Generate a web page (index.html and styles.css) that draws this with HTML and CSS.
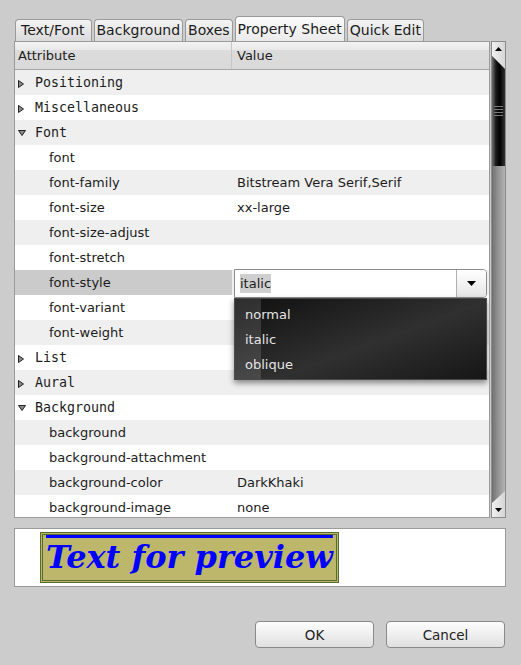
FILE: index.html
```html
<!DOCTYPE html>
<html lang="en">
<head>
  <meta charset="UTF-8">
  <title>Style Editor</title>
  <link rel="stylesheet" href="styles.css">
</head>
<body>
  <div class="dialog">
    <div class="tabs">
      <div class="tab first">Text/Font</div>
      <div class="tab">Background</div>
      <div class="tab">Boxes</div>
      <div class="tab active">Property Sheet</div>
      <div class="tab">Quick Edit</div>
    </div>

    <div class="sheet">
      <div class="grid">
        <div class="head">
          <div class="hcell attr">Attribute</div>
          <div class="hcell">Value</div>
        </div>
        <div class="rows">
          <div class="row group"><div class="attr"><svg class="tri closed" width="6" height="8" viewBox="0 0 6 8"><path d="M0.5 0.5 L5.5 4 L0.5 7.5 Z"/></svg>Positioning</div><div class="val"></div></div>
          <div class="row group"><div class="attr"><svg class="tri closed" width="6" height="8" viewBox="0 0 6 8"><path d="M0.5 0.5 L5.5 4 L0.5 7.5 Z"/></svg>Miscellaneous</div><div class="val"></div></div>
          <div class="row group"><div class="attr"><svg class="tri open" width="8" height="6" viewBox="0 0 8 6"><path d="M0.5 0.5 L7.5 0.5 L4 5.5 Z"/></svg>Font</div><div class="val"></div></div>
          <div class="row"><div class="attr sub">font</div><div class="val"></div></div>
          <div class="row"><div class="attr sub">font-family</div><div class="val">Bitstream Vera Serif,Serif</div></div>
          <div class="row"><div class="attr sub">font-size</div><div class="val">xx-large</div></div>
          <div class="row"><div class="attr sub">font-size-adjust</div><div class="val"></div></div>
          <div class="row"><div class="attr sub">font-stretch</div><div class="val"></div></div>
          <div class="row sel">
            <div class="attr sub">font-style</div>
            <div class="val">
              <div class="combo">
                <div class="combo-text"><span class="picked">italic</span></div>
                <div class="combo-btn"><svg width="9" height="5" viewBox="0 0 9 5"><path d="M0 0 H9 L4.5 5 Z"/></svg></div>
                <div class="popup">
                  <div class="item">normal</div>
                  <div class="item">italic</div>
                  <div class="item">oblique</div>
                </div>
              </div>
            </div>
          </div>
          <div class="row"><div class="attr sub">font-variant</div><div class="val"></div></div>
          <div class="row"><div class="attr sub">font-weight</div><div class="val"></div></div>
          <div class="row group"><div class="attr"><svg class="tri closed" width="6" height="8" viewBox="0 0 6 8"><path d="M0.5 0.5 L5.5 4 L0.5 7.5 Z"/></svg>List</div><div class="val"></div></div>
          <div class="row group"><div class="attr"><svg class="tri closed" width="6" height="8" viewBox="0 0 6 8"><path d="M0.5 0.5 L5.5 4 L0.5 7.5 Z"/></svg>Aural</div><div class="val"></div></div>
          <div class="row group"><div class="attr"><svg class="tri open" width="8" height="6" viewBox="0 0 8 6"><path d="M0.5 0.5 L7.5 0.5 L4 5.5 Z"/></svg>Background</div><div class="val"></div></div>
          <div class="row"><div class="attr sub">background</div><div class="val"></div></div>
          <div class="row"><div class="attr sub">background-attachment</div><div class="val"></div></div>
          <div class="row"><div class="attr sub">background-color</div><div class="val">DarkKhaki</div></div>
          <div class="row"><div class="attr sub">background-image</div><div class="val">none</div></div>
        </div>
      </div>

      <div class="scrollbar">
        <div class="sb-btn"><svg width="7" height="4" viewBox="0 0 7 4"><path d="M3.5 0 L7 4 H0 Z"/></svg></div>
        <div class="sb-track">
          <div class="sb-thumb"><div class="grip"></div></div>
        </div>
        <div class="sb-btn"><svg width="7" height="4" viewBox="0 0 7 4"><path d="M0 0 H7 L3.5 4 Z"/></svg></div>
      </div>
    </div>

    <div class="preview">
      <span class="sample">Text for preview</span>
    </div>

    <div class="actions">
      <button class="btn">OK</button>
      <button class="btn">Cancel</button>
    </div>
  </div>
</body>
</html>
```

FILE: styles.css
```css
* { margin: 0; padding: 0; box-sizing: border-box; }
body {
  background: #cccccc;
  font-family: "DejaVu Sans", sans-serif;
  font-size: 13px;
  color: #1c1c1c;
}
.dialog {
  width: 492px;
  padding: 16px 0 0 14px;
  box-sizing: content-box;
}

/* tabs */
.tabs {
  display: flex;
  align-items: flex-end;
  gap: 2px;
  height: 25px;
  padding-left: 1px;
}
.tab {
  height: 22px;
  line-height: 21px;
  padding: 0 2px;
  font-size: 14px;
  border: 1px solid #9a9a9a;
  border-bottom: none;
  border-radius: 4px 4px 0 0;
  background: linear-gradient(#f4f4f4, #dadada);
}
.tab.first { padding: 0 6px 0 5px; }
.tab.active {
  height: 25px;
  line-height: 24px;
  background: linear-gradient(#fbfbfb, #ebebeb);
}

/* property sheet */
.sheet {
  display: flex;
  gap: 1px;
  height: 477px;
}
.grid {
  width: 476px;
  border: 1px solid #9a9a9a;
  background: #fff;
  overflow: hidden;
}
.head {
  display: grid;
  grid-template-columns: 217px 1fr;
  height: 28px;
  border-bottom: 1px solid #a6a6a6;
  background: linear-gradient(#f3f3f3, #e9e9e9 28%, #dcdcdc 30%, #d9d9d9);
}
.hcell {
  line-height: 27px;
  padding-left: 5px;
}
.hcell.attr { border-right: 1px solid #c6c6c6; }
.row {
  display: grid;
  grid-template-columns: 217px 1fr;
  height: 25px;
  line-height: 25px;
  white-space: nowrap;
}
.row:nth-child(odd) { background: #efefef; }
.attr { padding-left: 3px; }
.attr.sub { padding-left: 34px; }
.val { padding-left: 5px; position: relative; }
.group .attr {
  font-family: "DejaVu Sans Mono", monospace;
  font-size: 13.3px;
}
.tri { fill: #8a8a8a; stroke: #222; stroke-width: 1; }
.tri.closed { margin-right: 11px; vertical-align: -1px; }
.tri.open { margin-right: 9px; vertical-align: 1px; }
.row.sel .attr { background: #cbcbcb; }

/* combo box */
.combo {
  position: absolute;
  left: 2px;
  right: 2px;
  top: -1px;
  height: 29px;
  display: flex;
  border: 1px solid #8c8c8c;
  border-radius: 0 4px 4px 0;
  background: #fff;
  z-index: 2;
}
.combo-text {
  flex: 1;
  padding-left: 5px;
  line-height: 27px;
}
.picked { background: #cfcfcf; padding: 2px 0; }
.combo-btn {
  width: 30px;
  display: flex;
  align-items: center;
  justify-content: center;
  border-left: 1px solid #b0b0b0;
  border-radius: 0 3px 3px 0;
  background: linear-gradient(#ffffff, #e6e6e6);
}
.popup {
  position: absolute;
  top: 28px;
  left: -1px;
  right: -1px;
  height: 82px;
  padding-top: 3px;
  border: 1px solid #4a4a4a;
  background: linear-gradient(160deg, #101010 0%, #2a2a2a 45%, #303030 55%, #161616 100%);
  box-shadow: 0 3px 6px rgba(0, 0, 0, 0.45);
  color: #e4e4e4;
}
.popup::before {
  content: "";
  position: absolute;
  top: 0;
  bottom: 0;
  left: 0;
  width: 26px;
  background: rgba(255, 255, 255, 0.13);
}
.item {
  position: relative;
  height: 25px;
  line-height: 25px;
  padding-left: 10px;
}

/* scrollbar */
.scrollbar {
  width: 15px;
  display: flex;
  flex-direction: column;
  border: 1px solid #8c8c8c;
  background: linear-gradient(90deg, #f0f0f0, #d6d6d6);
}
.sb-btn {
  height: 14px;
  display: flex;
  align-items: center;
  justify-content: center;
}
.sb-track {
  flex: 1;
  background: linear-gradient(90deg, #707070, #8e8e8e 40%, #b4b4b4);
  clip-path: polygon(0 0, 100% 13px, 100% calc(100% - 12px), 0 100%);
}
.sb-thumb {
  height: 110px;
  display: flex;
  align-items: center;
  justify-content: center;
  background: linear-gradient(90deg, #707070, #1a1a1a 30%, #000 60%, #333);
}
.grip {
  width: 9px;
  height: 10px;
  background: repeating-linear-gradient(#7a7a7a 0 1px, transparent 1px 3px);
}

/* preview */
.preview {
  margin-top: 10px;
  height: 59px;
  padding: 3px 0 0 25px;
  border: 1px solid #9a9a9a;
  background: #fff;
}
.sample {
  display: inline-block;
  padding: 0 3px;
  border: 3px double #556b2f;
  background: #bdb76b;
  color: #0000ff;
  font: italic bold 32px/45px "DejaVu Serif", serif;
  text-decoration: overline;
  text-decoration-thickness: 3px;
}

/* buttons */
.actions {
  display: flex;
  justify-content: flex-end;
  gap: 12px;
  margin-top: 34px;
  padding-right: 1px;
}
.btn {
  width: 119px;
  height: 27px;
  border: 1px solid #8a8a8a;
  border-radius: 4px;
  background: linear-gradient(#fdfdfd, #e0e0e0);
  font-family: "DejaVu Sans", sans-serif;
  font-size: 13.5px;
  color: #222;
}
```
